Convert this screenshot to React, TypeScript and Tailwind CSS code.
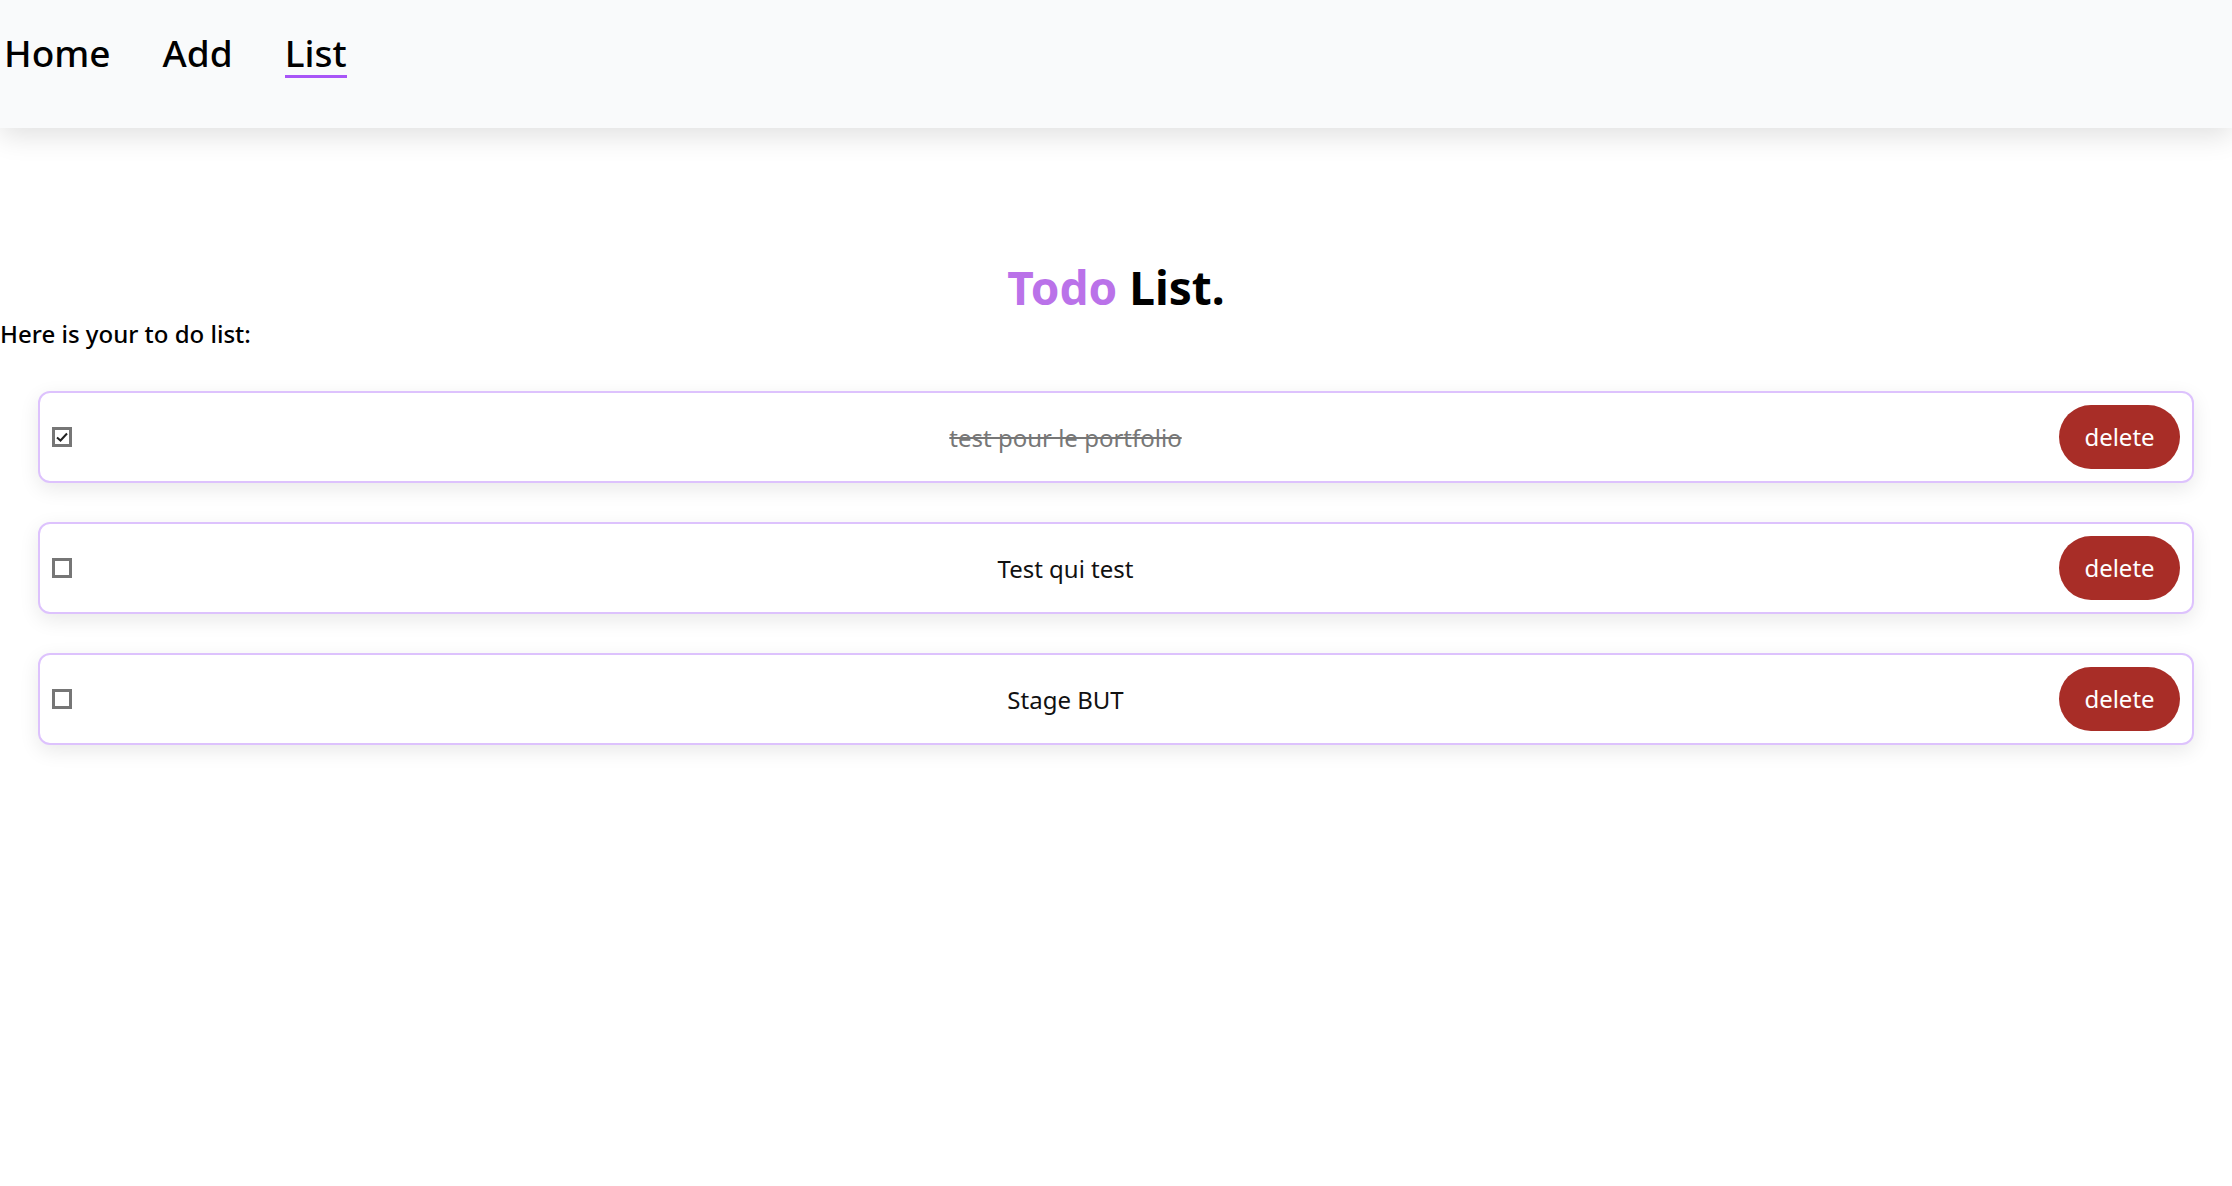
import { useState } from "react";

type Todo = {
  id: number;
  text: string;
  done: boolean;
};

const initialTodos: Todo[] = [
  { id: 1, text: "test pour le portfolio", done: true },
  { id: 2, text: "Test qui test", done: false },
  { id: 3, text: "Stage BUT", done: false },
];

function CheckBox({ checked, onToggle }: { checked: boolean; onToggle: () => void }) {
  return (
    <button
      onClick={onToggle}
      className="flex h-[20px] w-[20px] shrink-0 items-center justify-center border-[3px] border-[#767676] bg-white"
    >
      {checked && (
        <svg viewBox="0 0 14 14" className="h-[14px] w-[14px]">
          <path d="M2 7.5 L5.5 10.5 L12 3.5" fill="none" stroke="#222" strokeWidth="2" />
        </svg>
      )}
    </button>
  );
}

function TodoRow({
  todo,
  onToggle,
  onDelete,
}: {
  todo: Todo;
  onToggle: () => void;
  onDelete: () => void;
}) {
  return (
    <div className="flex items-center rounded-xl border-2 border-[#ddc2fd] bg-white py-[12px] pl-[12px] pr-[12px] shadow-[0_6px_20px_rgba(0,0,0,0.09)]">
      <CheckBox checked={todo.done} onToggle={onToggle} />
      <p
        className={`flex-1 pt-[2px] text-center text-[24px] ${
          todo.done ? "text-[#777] line-through decoration-[2px]" : "text-[#111]"
        }`}
      >
        {todo.text}
      </p>
      <button
        onClick={onDelete}
        className="h-[64px] w-[121px] rounded-full bg-[#a82d27] text-[24px] text-white"
      >
        delete
      </button>
    </div>
  );
}

export default function App() {
  const [todos, setTodos] = useState<Todo[]>(initialTodos);

  const toggle = (id: number) =>
    setTodos(todos.map((t) => (t.id === id ? { ...t, done: !t.done } : t)));
  const remove = (id: number) => setTodos(todos.filter((t) => t.id !== id));

  return (
    <div className="min-h-screen bg-white font-['Segoe_UI','Noto_Sans',sans-serif] text-black">
      <header className="h-[128px] bg-[#f9fafb] shadow-[0_8px_26px_rgba(0,0,0,0.12)]">
        <nav className="flex items-start gap-[52px] pl-[4px] pt-[34px] text-[37px] font-medium leading-none">
          <a href="#" className="pb-[7px]">Home</a>
          <a href="#" className="pb-[7px]">Add</a>
          <a href="#" className="border-b-[3px] border-[#a855f7] pb-[4px]">List</a>
        </nav>
      </header>

      <main>
        <h1 className="mt-[136px] text-center text-[46px] font-bold leading-none">
          <span className="text-[#ba72e9]">Todo</span> List.
        </h1>
        <p className="mt-[12px] text-[24px] font-medium leading-none">Here is your to do list:</p>

        <div className="mx-[38px] mt-[45px] flex flex-col gap-[39px]">
          {todos.map((todo) => (
            <TodoRow
              key={todo.id}
              todo={todo}
              onToggle={() => toggle(todo.id)}
              onDelete={() => remove(todo.id)}
            />
          ))}
        </div>
      </main>
    </div>
  );
}
